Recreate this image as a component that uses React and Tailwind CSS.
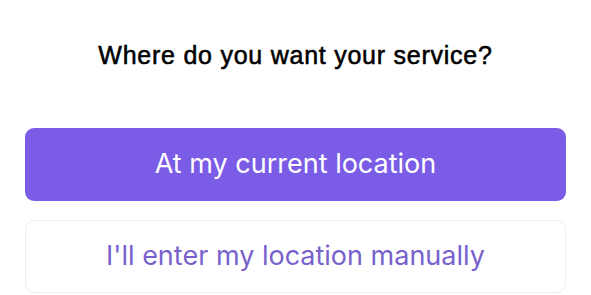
export default function App() {
  return (
    <div className="w-[591px] h-[295px] bg-white flex flex-col overflow-hidden">
      <h1
        className="mt-[40px] h-[32px] flex items-center justify-center text-[25px] tracking-[0.75px] font-normal text-black [-webkit-text-stroke:0.55px_black]"
        style={{ fontFamily: '"Liberation Sans", Arial, sans-serif' }}
      >
        Where do you want your service?
      </h1>
      <div className="mt-[56px] px-[25px] flex flex-col gap-[19px]" style={{ fontFamily: 'Inter, sans-serif' }}>
        <button className="h-[73px] w-full rounded-[9px] bg-[#7b5ce6] text-white text-[27px] flex items-center justify-center">
          At my current location
        </button>
        <button className="h-[73px] w-full rounded-[9px] bg-white border border-[#eeeeee] text-[#7862cc] text-[27px] flex items-center justify-center">
          I'll enter my location manually
        </button>
      </div>
    </div>
  );
}
